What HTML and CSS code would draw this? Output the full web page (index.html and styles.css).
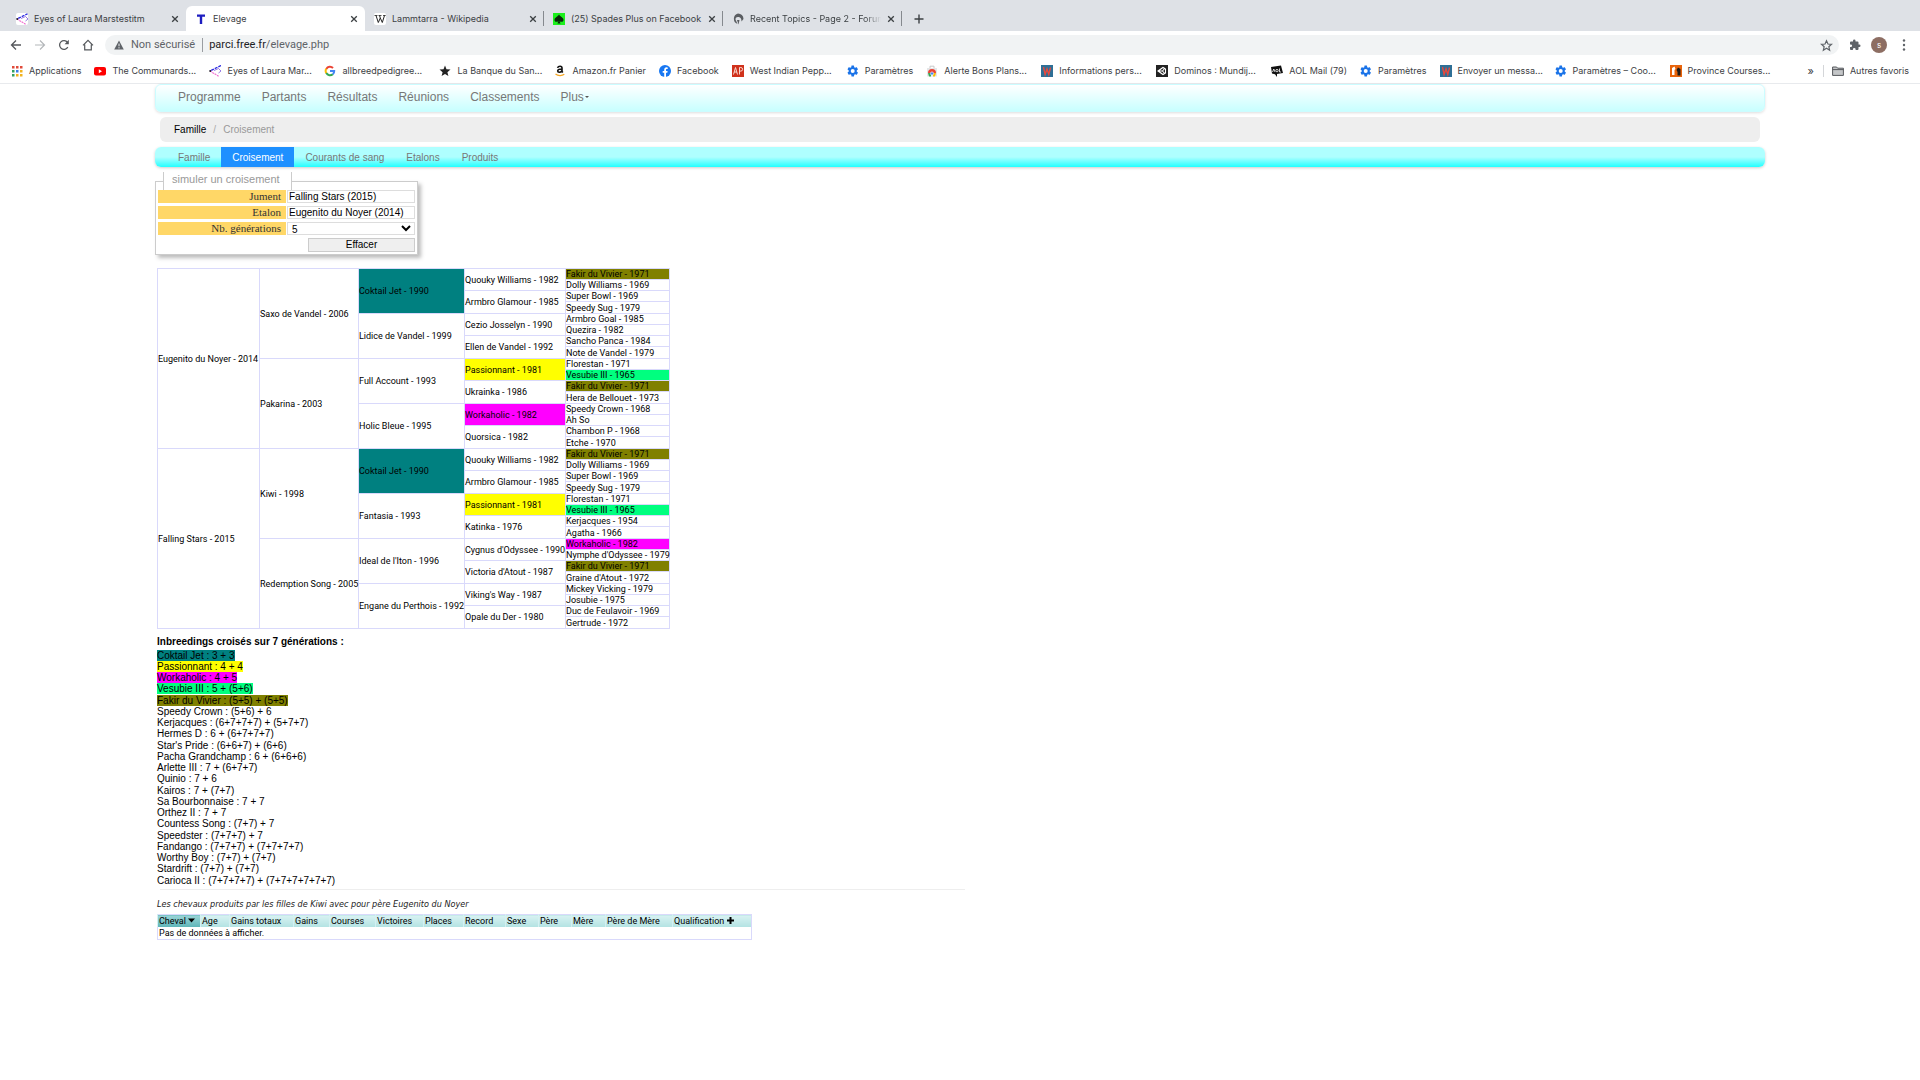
FILE: index.html
```html
<!DOCTYPE html>
<html lang="fr">
<head>
<meta charset="utf-8">
<title>Elevage</title>
<link rel="stylesheet" href="styles.css">
</head>
<body>
<svg class="defs" aria-hidden="true">
  <symbol id="i-eyes" viewBox="0 0 12 12"><path d="M12 .5 1 6" stroke="#2a2ae0" stroke-width="1.3" stroke-dasharray="3 1" fill="none"/><path d="M1 6l9 5.5" stroke="#f070d0" stroke-width="1.2" stroke-dasharray="2 .7" fill="none"/><path d="M5 5.500l4.500-2L12 6 9.500 8" stroke="#8a6be0" stroke-width=".9" fill="none"/><circle cx="1.200" cy="6" r=".9" fill="#111"/></symbol>
  <symbol id="i-close" viewBox="0 0 8 8"><path d="M1.200 1.200l5.600 5.600M6.800 1.200 1.200 6.800" stroke="#3c4043" stroke-width="1.300"/></symbol>
  <symbol id="i-gear" viewBox="0 0 24 24"><path fill="#1a73e8" fill-rule="evenodd" d="M19.400 13a7.500 7.500 0 0 0 0-2l2.300-1.800a.6.6 0 0 0 .1-.7l-2.200-3.800a.6.6 0 0 0-.7-.3l-2.700 1.100a8 8 0 0 0-1.800-1L14 1.600a.6.6 0 0 0-.6-.5h-4a.6.6 0 0 0-.5.500L8.500 4.500a8 8 0 0 0-1.800 1L4 4.400a.6.6 0 0 0-.7.300L1.100 8.500a.6.6 0 0 0 .2.700L3.500 11a7.500 7.500 0 0 0 0 2l-2.300 1.800a.6.6 0 0 0-.1.700l2.200 3.800c.1.300.4.300.7.300l2.700-1.100a8 8 0 0 0 1.800 1l.4 2.900c0 .3.300.5.500.5h4c.3 0 .5-.2.600-.5l.4-2.900a8 8 0 0 0 1.800-1l2.700 1.100c.3.100.5 0 .7-.3l2.200-3.800a.6.6 0 0 0-.1-.7zM11.400 16a4 4 0 1 1 0-8 4 4 0 0 1 0 8z"/></symbol>
  <symbol id="i-w" viewBox="0 0 12 12"><path fill="#2e6f96" d="M0 0h12v12H0z"/><path d="M2.500 2l1.600 7.500L6 4l1.800 5.500L9.500 2.500" stroke="#e8483c" stroke-width="1.400" fill="none"/></symbol>
</svg>

<header class="browser">
  <div class="tabs">
    <div class="tab"><svg class="fav white"><use href="#i-eyes"/></svg><span class="tab-title">Eyes of Laura Marstestitm</span><button class="close" aria-label="Fermer"><svg><use href="#i-close"/></svg></button></div>
    <div class="tab active"><svg class="fav" viewBox="0 0 12 12"><path fill="#1d1dc0" d="M2 1.500h8v2.200H7.200V11H4.800V3.700H2z"/></svg><span class="tab-title">Elevage</span><button class="close" aria-label="Fermer"><svg><use href="#i-close"/></svg></button></div>
    <div class="tab"><svg class="fav white" viewBox="0 0 12 12"><path d="M.5 2.500h3M4.500 2.500h3M9 2.500h2.700" stroke="#222" stroke-width=".8"/><path d="M2 2.500l2.300 7L6.300 5 5.500 2.500M6.300 5l2 4.500 2.200-7" stroke="#222" stroke-width="1" fill="none"/></svg><span class="tab-title">Lammtarra - Wikipedia</span><button class="close" aria-label="Fermer"><svg><use href="#i-close"/></svg></button></div>
    <div class="tab"><svg class="fav" viewBox="0 0 12 12"><path fill="#1cf01c" d="M0 0h12v12H0z"/><path fill="#0a2a0a" d="M6 1.500c1 2 4.500 3 4.500 5.400 0 2-2.800 2.500-3.900 1L7.500 10.500h-3l.9-2.600c-1.100 1.500-3.900 1-3.900-1C1.500 4.500 5 3.500 6 1.500z"/></svg><span class="tab-title">(25) Spades Plus on Facebook</span><button class="close" aria-label="Fermer"><svg><use href="#i-close"/></svg></button></div>
    <div class="tab"><svg class="fav" viewBox="0 0 12 12"><path fill="#5a5d61" d="M6 .5a5.500 5.500 0 0 1 5.500 5.500L9.500 8.500C9.500 5 8 4 6 4S3.500 5 3.500 6.500L5.500 11A5.500 5.500 0 0 1 6 .5z"/><path fill="#5a5d61" d="M5 7h2.500L6.500 11.500z"/></svg><span class="tab-title fade">Recent Topics - Page 2 - Forum</span><button class="close" aria-label="Fermer"><svg><use href="#i-close"/></svg></button></div>
    <button class="new-tab" aria-label="Nouvel onglet"><svg viewBox="0 0 10 10"><path d="M5 .5v9M.5 5h9" stroke="#3c4043" stroke-width="1.400"/></svg></button>
  </div>

  <div class="toolbar">
    <button class="tool" aria-label="Retour"><svg viewBox="0 0 12 12"><path d="M11 6H1.800M6 1.500 1.500 6 6 10.500" fill="none" stroke="#55585c" stroke-width="1.300"/></svg></button>
    <button class="tool" aria-label="Avancer"><svg viewBox="0 0 12 12"><path d="M1 6h9.200M6 1.500 10.500 6 6 10.500" fill="none" stroke="#b4b7ba" stroke-width="1.200"/></svg></button>
    <button class="tool" aria-label="Actualiser"><svg viewBox="0 0 12 12"><path d="M9.800 8.200A4.400 4.400 0 1 1 9.500 3.300" fill="none" stroke="#55585c" stroke-width="1.300"/><path fill="#55585c" d="M10.800.8v4.400H6.600z"/></svg></button>
    <button class="tool" aria-label="Accueil"><svg viewBox="0 0 12 12"><path d="M1 6.300 6 1.300l5 5M2.700 5.500v5.300h6.600V5.500" fill="none" stroke="#55585c" stroke-width="1.200"/></svg></button>
    <div class="omnibox">
      <svg class="warn" viewBox="0 0 10 10"><path fill="#5f6368" d="M5 .5 9.800 9.500H.2z"/><path stroke="#f1f3f4" d="M5 3.600v2.700M5 7.200v1.200"/></svg>
      <span class="unsafe">Non sécurisé</span>
      <span class="url"><b>parci.free.fr</b>/elevage.php</span>
      <svg class="star" viewBox="0 0 24 24"><path fill="none" stroke="#5f6368" stroke-width="2.200" d="M12 3l2.700 6.200 6.600.6-5 4.400 1.500 6.500L12 17.200l-5.800 3.500 1.500-6.500-5-4.400 6.600-.6z"/></svg>
    </div>
    <button class="tool" aria-label="Extensions"><svg viewBox="0 0 24 24"><path fill="#5f6368" d="M20.500 11H19V7a2 2 0 0 0-2-2h-4V3.500a2.500 2.500 0 0 0-5 0V5H4a2 2 0 0 0-2 2v3.800h1.500a2.700 2.700 0 0 1 0 5.400H2V20a2 2 0 0 0 2 2h3.800v-1.500a2.700 2.700 0 0 1 5.400 0V22H17a2 2 0 0 0 2-2v-4h1.500a2.500 2.500 0 0 0 0-5z"/></svg></button>
    <button class="avatar" aria-label="Profil">s</button>
    <button class="tool" aria-label="Menu"><svg viewBox="0 0 12 12"><g fill="#5f6368"><circle cx="6" cy="1.500" r="1.200"/><circle cx="6" cy="6" r="1.200"/><circle cx="6" cy="10.500" r="1.200"/></g></svg></button>
  </div>

  <nav class="bookmarks">
    <a href="#"><svg viewBox="0 0 12 12"><g fill="#e04a3a"><path d="M1 1h2.500v2.500H1zM5 1h2.500v2.500H5zM9 1h2.500v2.500H9z"/></g><path fill="#34a060" d="M1 5h2.500v2.500H1zM1 9h2.500v2.500H1z"/><path fill="#3b7de8" d="M5 5h2.500v2.500H5z"/><path fill="#f2b21c" d="M9 5h2.500v2.500H9zM5 9h2.500v2.500H5zM9 9h2.500v2.500H9z"/></svg>Applications</a>
    <a href="#" class="cut"><svg viewBox="0 0 12 12"><rect x="0" y="2" width="12" height="8.500" rx="2" fill="#f00"/><path fill="#fff" d="M4.800 4.300 8 6.200 4.800 8.200z"/></svg>The Communards...</a>
    <a href="#" class="cut"><svg><use href="#i-eyes"/></svg>Eyes of Laura Mar...</a>
    <a href="#" class="cut"><svg viewBox="0 0 12 12" fill="none" stroke-width="2"><path stroke="#ea4335" d="M2.300 3.900A4.200 4.200 0 0 1 9 3"/><path stroke="#fbbc05" d="M2.300 3.800a4.200 4.200 0 0 0 0 4.400"/><path stroke="#34a853" d="M2.300 8.100a4.200 4.200 0 0 0 6.500 1.100"/><path stroke="#4285f4" d="M8.800 9.200A4 4 0 0 0 10.200 6H6"/></svg>allbreedpedigree...</a>
    <a href="#" class="cut"><svg viewBox="0 0 12 12"><path fill="#222" d="M6 .6l1.500 3.700 4 .3-3.100 2.600 1 3.900L6 9l-3.400 2.100 1-3.900L.5 4.600l4-.3z"/></svg>La Banque du San...</a>
    <a href="#"><svg viewBox="0 0 12 12"><path d="M3.500 2.800C4.500.8 8 .8 8 3v3.500l.8 1M7.800 4C5 4 3.700 4.500 3.700 6S6.500 8 7.700 6" fill="none" stroke="#111" stroke-width="1.600"/><path d="M1.500 9c2.500 2 6.500 2 8.800.3" fill="none" stroke="#f5a623" stroke-width="1.200"/></svg>Amazon.fr Panier</a>
    <a href="#"><svg viewBox="0 0 12 12"><circle cx="6" cy="6" r="6" fill="#1877f2"/><path fill="#fff" d="M5.200 12V7.800H3.700V6.100h1.500V4.700c0-1.500.9-2.400 2.300-2.400l1.200.1v1.500h-.8c-.7 0-.9.4-.9.900v1.300h1.600l-.3 1.700H7V12z"/></svg>Facebook</a>
    <a href="#" class="cut"><svg viewBox="0 0 12 12"><path fill="#d0321c" d="M0 0h12v12H0z"/><path d="M1.500 9.500l2-7 2 7M2 7h3M7.500 9.500v-7h1.300a1.700 1.700 0 0 1 0 3.600H7.500" fill="none" stroke="#f8d8d0"/></svg>West Indian Pepp...</a>
    <a href="#"><svg><use href="#i-gear"/></svg>Paramètres</a>
    <a href="#" class="cut"><svg viewBox="0 0 12 12"><path d="M4 3V1.200h4V3" fill="none" stroke="#c8c8c8"/><path fill="#e4e6e8" d="M1 3h10v8.500H1z"/><path fill="#ea4335" d="M2 8a4 4 0 0 1 8 0z"/><path fill="#34a853" d="M2 8h3v3.500H3z"/><path fill="#fbbc05" d="M7 8h3l-1 3.500H7z"/><circle cx="6" cy="8.500" r="1.600" fill="#4285f4" stroke="#fff" stroke-width=".6"/></svg>Alerte Bons Plans...</a>
    <a href="#" class="cut"><svg><use href="#i-w"/></svg>Informations pers...</a>
    <a href="#" class="cut"><svg viewBox="0 0 12 12"><path fill="#222" d="M0 0h12v12H0z"/><path d="M2 6l5-3.500L9.500 4v4L7 9.500zM2 6h4.500M6.500 6l2.500-3M6.500 6 9 9" fill="none" stroke="#fff" stroke-width="1.100"/></svg>Dominos : Mundij...</a>
    <a href="#"><svg viewBox="0 0 12 12"><path fill="#111" d="M0 2l10-1.500L12 8l-6 1v3L4 9.200 1 8.500z"/><path d="M1.500 7l1.300-3L4 7M8.500 3.500V7H10" fill="none" stroke="#fff" stroke-width=".8"/><circle cx="6" cy="5.600" r="1.200" fill="none" stroke="#fff" stroke-width=".8"/></svg>AOL Mail (79)</a>
    <a href="#"><svg><use href="#i-gear"/></svg>Paramètres</a>
    <a href="#" class="cut"><svg><use href="#i-w"/></svg>Envoyer un messa...</a>
    <a href="#" class="cut"><svg><use href="#i-gear"/></svg>Paramètres – Coo...</a>
    <a href="#" class="cut"><svg viewBox="0 0 12 12"><path fill="#e8640c" d="M0 0h12v12H0z"/><path fill="#fff" d="M2 10V3l2.500-1.500 1 2.500L4.500 5v5z"/><path fill="#1c1c1c" d="M6.500 5 8 2.500 10.500 4v6.500h-3V7z"/></svg>Province Courses...</a>
    <span class="more">»</span>
    <a href="#" class="others"><svg viewBox="0 0 12 12"><path d="M.6 2h4l1 1.200h5.800v7.200H.6z" fill="#c4c6c8" stroke="#55585c"/><path stroke="#55585c" d="M.6 4.600h10.800"/></svg>Autres favoris</a>
  </nav>
</header>

<main class="page">
  <nav class="mainnav">
    <a href="#">Programme</a><a href="#">Partants</a><a href="#">Résultats</a><a href="#">Réunions</a><a href="#">Classements</a><a href="#" class="drop">Plus</a>
  </nav>
  <nav class="crumbs"><a href="#">Famille</a><span class="slash">/</span><span>Croisement</span></nav>
  <nav class="subnav">
    <a href="#">Famille</a><a href="#" class="on">Croisement</a><a href="#">Courants de sang</a><a href="#">Etalons</a><a href="#">Produits</a>
  </nav>

  <fieldset class="sim">
    <legend>simuler un croisement</legend>
    <label for="jument">Jument</label><input id="jument" type="text" value="Falling Stars (2015)">
    <label for="etalon">Etalon</label><input id="etalon" type="text" value="Eugenito du Noyer (2014)">
    <label for="gen">Nb. générations</label><select id="gen"><option>5</option></select>
    <button type="button">Effacer</button>
  </fieldset>

  <table class="pedigree">
    <colgroup><col class="g1"><col class="g2"><col class="g3"><col class="g4"><col class="g5"></colgroup>
    <tbody>
    <tr><td rowspan="16">Eugenito du Noyer - 2014</td><td rowspan="8">Saxo de Vandel - 2006</td><td rowspan="4" class="teal">Coktail Jet - 1990</td><td rowspan="2">Quouky Williams - 1982</td><td class="olive">Fakir du Vivier - 1971</td></tr>
    <tr><td>Dolly Williams - 1969</td></tr>
    <tr><td rowspan="2">Armbro Glamour - 1985</td><td>Super Bowl - 1969</td></tr>
    <tr><td>Speedy Sug - 1979</td></tr>
    <tr><td rowspan="4">Lidice de Vandel - 1999</td><td rowspan="2">Cezio Josselyn - 1990</td><td>Armbro Goal - 1985</td></tr>
    <tr><td>Quezira - 1982</td></tr>
    <tr><td rowspan="2">Ellen de Vandel - 1992</td><td>Sancho Panca - 1984</td></tr>
    <tr><td>Note de Vandel - 1979</td></tr>
    <tr><td rowspan="8">Pakarina - 2003</td><td rowspan="4">Full Account - 1993</td><td rowspan="2" class="yellow">Passionnant - 1981</td><td>Florestan - 1971</td></tr>
    <tr><td class="green">Vesubie III - 1965</td></tr>
    <tr><td rowspan="2">Ukrainka - 1986</td><td class="olive">Fakir du Vivier - 1971</td></tr>
    <tr><td>Hera de Bellouet - 1973</td></tr>
    <tr><td rowspan="4">Holic Bleue - 1995</td><td rowspan="2" class="magenta">Workaholic - 1982</td><td>Speedy Crown - 1968</td></tr>
    <tr><td>Ah So</td></tr>
    <tr><td rowspan="2">Quorsica - 1982</td><td>Chambon P - 1968</td></tr>
    <tr><td>Etche - 1970</td></tr>
    <tr><td rowspan="16">Falling Stars - 2015</td><td rowspan="8">Kiwi - 1998</td><td rowspan="4" class="teal">Coktail Jet - 1990</td><td rowspan="2">Quouky Williams - 1982</td><td class="olive">Fakir du Vivier - 1971</td></tr>
    <tr><td>Dolly Williams - 1969</td></tr>
    <tr><td rowspan="2">Armbro Glamour - 1985</td><td>Super Bowl - 1969</td></tr>
    <tr><td>Speedy Sug - 1979</td></tr>
    <tr><td rowspan="4">Fantasia - 1993</td><td rowspan="2" class="yellow">Passionnant - 1981</td><td>Florestan - 1971</td></tr>
    <tr><td class="green">Vesubie III - 1965</td></tr>
    <tr><td rowspan="2">Katinka - 1976</td><td>Kerjacques - 1954</td></tr>
    <tr><td>Agatha - 1966</td></tr>
    <tr><td rowspan="8">Redemption Song - 2005</td><td rowspan="4">Ideal de l'Iton - 1996</td><td rowspan="2">Cygnus d'Odyssee - 1990</td><td class="magenta">Workaholic - 1982</td></tr>
    <tr><td>Nymphe d'Odyssee - 1979</td></tr>
    <tr><td rowspan="2">Victoria d'Atout - 1987</td><td class="olive">Fakir du Vivier - 1971</td></tr>
    <tr><td>Graine d'Atout - 1972</td></tr>
    <tr><td rowspan="4">Engane du Perthois - 1992</td><td rowspan="2">Viking's Way - 1987</td><td>Mickey Vicking - 1979</td></tr>
    <tr><td>Josubie - 1975</td></tr>
    <tr><td rowspan="2">Opale du Der - 1980</td><td>Duc de Feulavoir - 1969</td></tr>
    <tr><td>Gertrude - 1972</td></tr>
    </tbody>
  </table>

  <h2>Inbreedings croisés sur 7 générations :</h2>
  <ul class="inbreeding">
    <li><span class="teal">Coktail Jet : 3 + 3</span></li>
    <li><span class="yellow">Passionnant : 4 + 4</span></li>
    <li><span class="magenta">Workaholic : 4 + 5</span></li>
    <li><span class="green">Vesubie III : 5 + (5+6)</span></li>
    <li><span class="olive">Fakir du Vivier : (5+5) + (5+5)</span></li>
    <li>Speedy Crown : (5+6) + 6</li>
    <li>Kerjacques : (6+7+7+7) + (5+7+7)</li>
    <li>Hermes D : 6 + (6+7+7+7)</li>
    <li>Star's Pride : (6+6+7) + (6+6)</li>
    <li>Pacha Grandchamp : 6 + (6+6+6)</li>
    <li>Arlette III : 7 + (6+7+7)</li>
    <li>Quinio : 7 + 6</li>
    <li>Kairos : 7 + (7+7)</li>
    <li>Sa Bourbonnaise : 7 + 7</li>
    <li>Orthez II : 7 + 7</li>
    <li>Countess Song : (7+7) + 7</li>
    <li>Speedster : (7+7+7) + 7</li>
    <li>Fandango : (7+7+7) + (7+7+7+7)</li>
    <li>Worthy Boy : (7+7) + (7+7)</li>
    <li>Stardrift : (7+7) + (7+7)</li>
    <li>Carioca II : (7+7+7+7) + (7+7+7+7+7+7)</li>
  </ul>
  <hr>
  <p class="note">Les chevaux produits par les filles de Kiwi avec pour père Eugenito du Noyer</p>
  <table class="results">
    <colgroup><col class="c43"><col class="c29"><col class="c64"><col class="c36"><col class="c46"><col class="c48"><col class="c40"><col class="c42"><col class="c33"><col class="c33"><col class="c34"><col class="c67"><col class="c79"></colgroup>
    <thead><tr><th class="sorted">Cheval <svg viewBox="0 0 7 5"><path d="M0 .5h7L3.500 4.500z"/></svg></th><th>Age</th><th>Gains totaux</th><th>Gains</th><th>Courses</th><th>Victoires</th><th>Places</th><th>Record</th><th>Sexe</th><th>Père</th><th>Mère</th><th>Père de Mère</th><th>Qualification <svg class="plus" viewBox="0 0 7 7"><path d="M2.500 0h2v2.500H7v2H4.500V7h-2V4.500H0v-2h2.500z"/></svg></th></tr></thead>
    <tbody><tr><td colspan="13">Pas de données à afficher.</td></tr></tbody>
  </table>
</main>
</body>
</html>
```
FILE: styles.css
```css
* { box-sizing: border-box; }
body { margin: 0; background: #fff; color: #000; font: 10px/12px "Liberation Sans", Arial, sans-serif; }
a { color: inherit; text-decoration: none; }
button { border: 0; padding: 0; background: none; font: inherit; color: inherit; }
.defs { position: absolute; width: 0; height: 0; }

/* Browser frame */
.browser { font: 9px/12px Inter, Roboto, sans-serif; color: #3c4043; border-bottom: 1px solid #e8eaed; }
.tabs { display: flex; align-items: center; height: 31px; padding: 6px 0 0 7px; background: #dee1e6; }
.tab { display: flex; align-items: center; gap: 6px; width: 179px; height: 25px; padding: 0 7px 0 9px; }
.tab.active { background: #fff; border-radius: 6px 6px 0 0; }
.tab:nth-child(n+3) { background: linear-gradient(#85898e, #85898e) right center / 1px 15px no-repeat; }
.fav { flex: none; width: 12px; height: 12px; }
.fav.white { background: #fff; border-radius: 2px; }
.tab-title { flex: 1; overflow: hidden; white-space: nowrap; }
.fade { -webkit-mask-image: linear-gradient(90deg, #000 88%, transparent); mask-image: linear-gradient(90deg, #000 88%, transparent); }
.close, .close svg { display: block; width: 8px; height: 8px; }
.new-tab { margin-left: 12px; width: 10px; height: 10px; }
.new-tab svg { display: block; }
.toolbar { display: flex; align-items: center; gap: 12px; height: 28px; padding: 0 10px; }
.tool, .tool svg { display: block; width: 12px; height: 12px; }
.omnibox { display: flex; align-items: center; flex: 1; height: 20px; margin: 0 -2px 0 -1px; padding: 0 6px 0 9px; border-radius: 10px; background: #f1f3f4; font: 11px/14px Roboto, Inter, sans-serif; color: #5f6368; }
.warn { width: 10px; height: 10px; margin-right: 7px; }
.unsafe { padding-right: 7px; border-right: 1px solid #9a9da1; }
.url { flex: 1; padding-left: 6px; }
.url b { font-weight: 400; color: #202124; }
.star { width: 13px; height: 13px; }
.avatar { width: 16px; height: 16px; margin: 0 -1px 0 -2px; border-radius: 50%; background: #8d6e63; color: #fff; font-size: 8px; line-height: 16px; }
.bookmarks { display: flex; align-items: center; gap: 13px; height: 24px; padding: 0 11px; white-space: nowrap; }
.bookmarks a { display: flex; align-items: center; gap: 6px; }
.bookmarks svg { flex: none; width: 12px; height: 12px; }
.bookmarks .cut { width: 102px; }
.more { margin-left: auto; font-size: 11px; }
.bookmarks .others { margin-left: -4px; padding-left: 8px; border-left: 1px solid #d4d6d9; }

/* Site */
.page { padding: 0 155px; }
.mainnav { display: flex; align-items: center; gap: 21px; height: 28px; padding: 0 22px 2px; border: 1px solid #ccfcff; border-radius: 6px; background: linear-gradient(#fff, #c8ffff); box-shadow: 0 1px 3px #0002; color: #777; font-size: 12px; line-height: 14px; }
.drop::after { content: ""; display: inline-block; margin-left: 1px; vertical-align: 3px; border: 2px solid transparent; border-top-color: #555; border-bottom: 0; }
.crumbs { display: flex; align-items: center; height: 25px; margin: 5px; padding: 0 14px; border-radius: 6px; background: #eee; color: #999; }
.crumbs a { color: #000; }
.slash { width: 17px; text-align: center; color: #aaa; }
.subnav { display: flex; height: 20px; padding: 0 12px; border-radius: 6px; background: linear-gradient(#afffff 50%, #2ff); box-shadow: 0 1px 3px #0003; color: #777; }
.subnav a { padding: 0 11px; line-height: 21px; }
.subnav .on { background: #1e90ff; color: #fff; }

.sim { display: grid; grid-template-columns: 128px 128px; gap: 3px 1px; width: 262px; margin: 5px 0 0; padding: 0 2px 2px; border: 1px solid #ccc; background: #fff; box-shadow: 3px 3px 4px #0004; }
.sim legend { height: 18px; margin-left: 5px; padding: 0 11px 0 8px; border: solid #ccc; border-width: 0 1px; background: #fff; color: #999; font-size: 11px; line-height: 15px; }
.sim label { padding-right: 5px; background: #ffd767; color: #333; font: 11px/13px "Liberation Serif", "Times New Roman", serif; text-align: right; }
.sim input, .sim select { width: 100%; height: 13px; padding: 0 1px; border: 1px solid #ddd; background: #fff; color: #000; font: 10px/11px "Liberation Sans", Arial, sans-serif; }
.sim select { padding: 0; border-radius: 0; }
.sim button { grid-column: 2; justify-self: end; width: 107px; height: 14px; border: 1px solid #ccc; background: #efefef; color: #000; }

.teal { background: #008080; }
.yellow { background: #ff0; }
.magenta { background: #f0f; }
.green { background: #00ff7f; }
.olive { background: #808000; }

table { border-collapse: collapse; table-layout: fixed; font: 9px/10px Roboto, Tahoma, sans-serif; color: #000; }
.pedigree { width: 513px; margin: 13px 0 0 2px; }
.pedigree td { padding: 0; border: 1px solid #d9d9fb; white-space: nowrap; }
.pedigree tr:nth-child(4n) { height: 12px; }
.g1 { width: 102px; }
.g2 { width: 99px; }
.g3 { width: 106px; }
.g4 { width: 101px; }
.g5 { width: 104px; }

h2 { margin: 7px 0 2px 2px; font-size: 10px; line-height: 12px; }
.inbreeding { margin: 0 0 0 2px; padding: 0; list-style: none; line-height: 11px; }
.inbreeding li:nth-child(4n) { padding-bottom: 1px; }
hr { width: 50%; margin: 3px 0 0 5px; border: 0; border-top: 1px solid #eee; }
.note { margin: 8px 0 3px 2px; color: #222; font: italic 9px/13px "DejaVu Sans Condensed", Tahoma, sans-serif; }
.results { width: 595px; margin-left: 2px; border: 1px solid #d9d9fb; line-height: 12px; }
.results th { padding: 0 0 0 1px; border-left: 1px solid #d4f0f2; background: linear-gradient(#d8f2f2, #b2e2e2); font-weight: 400; text-align: left; white-space: nowrap; }
.results .sorted { background: linear-gradient(#9ad4d6, #5cb4b8); }
.results td { padding: 0 0 0 1px; }
.results svg { width: 7px; height: 5px; vertical-align: 1px; }
.results .plus { height: 7px; vertical-align: 0; }
.c43 { width: 43px; } .c29 { width: 29px; } .c64 { width: 64px; } .c36 { width: 36px; }
.c46 { width: 46px; } .c48 { width: 48px; } .c40 { width: 40px; } .c42 { width: 42px; }
.c33 { width: 33px; } .c34 { width: 34px; } .c67 { width: 67px; } .c79 { width: 79px; }
```
